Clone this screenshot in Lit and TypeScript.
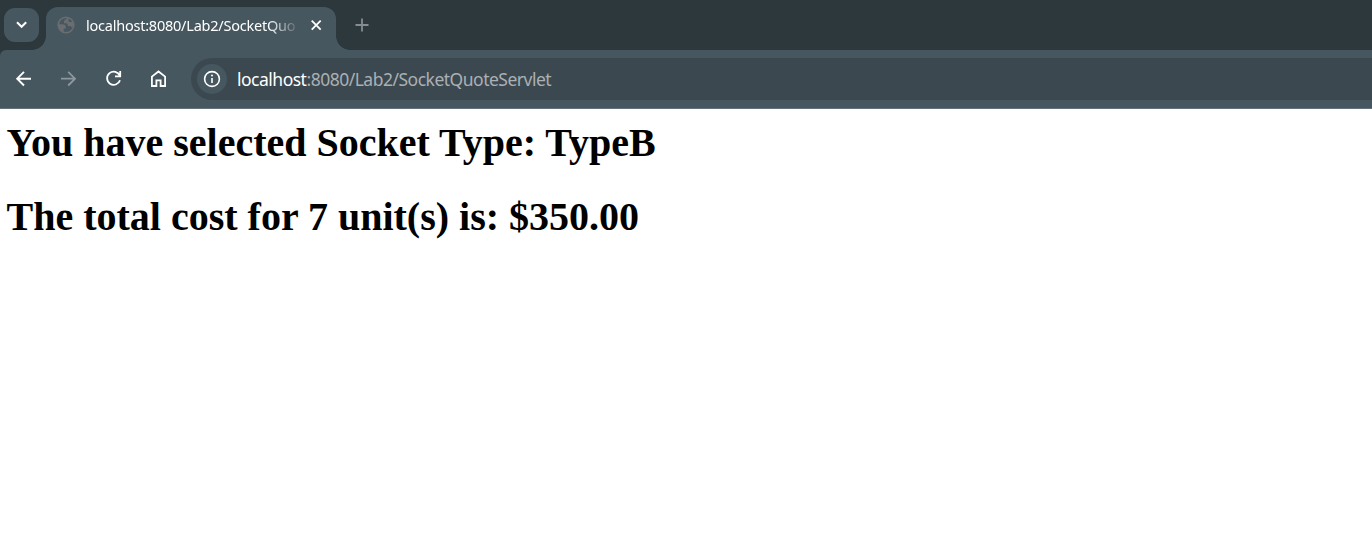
import { LitElement, html, css } from "lit";
import { customElement } from "lit/decorators.js";

@customElement("browser-tabs")
class BrowserTabs extends LitElement {
  static styles = css`
    :host { display: flex; height: 50px; background: #2d383d; box-sizing: border-box; padding: 7px 0 0 4px; align-items: flex-start; font-family: "Noto Sans", "Open Sans", sans-serif; }
    svg { display: block; flex: none; }
    .search { width: 35px; height: 34px; margin-top: 1px; border-radius: 11px; background: #465760; display: grid; place-items: center; }
    .tab { position: relative; width: 290px; height: 43px; margin-left: 7px; box-sizing: border-box; background: #465760; border-radius: 12px 12px 0 0; display: flex; padding: 0 0 7px 11px; align-items: center; }
    .tab::before, .tab::after { content: ""; position: absolute; bottom: 0; width: 14px; height: 14px; }
    .tab::before { left: -14px; background: radial-gradient(circle at 0 0, transparent 13.5px, #465760 14.2px); }
    .tab::after { right: -14px; background: radial-gradient(circle at 100% 0, transparent 13.5px, #465760 14.2px); }
    .title { width: 212px; margin: 0 0 0 11px; white-space: nowrap; color: #fff; font-size: 14.5px; line-height: 20px; letter-spacing: -0.23px; mask-image: linear-gradient(to right, #000 182px, transparent 214px); }
    .close { margin-left: 12px; }
    .add { margin: 11px 0 0 19px; }
  `;
  render() {
    return html`
      <div class="search"><svg width="12" height="8" viewBox="0 0 12 8" fill="none" stroke="#fff" stroke-width="2"><path d="M1 1.3 5.6 5.8 10.2 1.3" /></svg></div>
      <div class="tab">
        <svg width="18" height="18" viewBox="0 0 18 18"><circle cx="9" cy="9" r="7.8" fill="none" stroke="#6b6d70" stroke-width="1.6" /><path fill="#6b6d70" d="M9.5 1.2V3.3Q7 3.3 7 5.5V7.2H9.3Q10.8 7.2 10.8 9V10H13.2Q14.2 10 14.2 11.3L16.6 10.5 17 8.5 15.5 6H13Q11.5 6 11.5 4.5V1.8ZM1.2 8.2H5.5Q8.8 8.2 8.8 11.2V12.4H6.7V16.5L3.5 14.5 1.2 11Z" /></svg>
        <div class="title">localhost:8080/Lab2/SocketQuo</div>
        <svg class="close" width="12" height="12" viewBox="0 0 12 12" stroke="#fff" stroke-width="1.8"><path d="M1.7 1.7 10.7 10.7M10.7 1.7 1.7 10.7" /></svg>
      </div>
      <svg class="add" width="14" height="14" viewBox="0 0 14 14" stroke="#858d92" stroke-width="1.8"><path d="M0.5 7H13.5M7 .5V13.5" /></svg>
    `;
  }
}

@customElement("browser-toolbar")
class BrowserToolbar extends LitElement {
  static styles = css`
    :host { display: block; background: #2d383d; }
    .bar { display: flex; height: 59px; box-sizing: border-box; padding: 8px 0 8px 14px; background: #465760; border-bottom: 1px solid #64737b; border-top-left-radius: 6px; font-family: "Noto Sans", "Open Sans", sans-serif; }
    svg { display: block; flex: none; }
    .nav { display: flex; gap: 25px; width: 177px; align-items: center; }
    .address { flex: 1; display: flex; align-items: center; background: #3c484f; border-radius: 21px 0 0 21px; padding-left: 6px; }
    .info { width: 30px; height: 30px; border-radius: 50%; background: #465760; display: grid; place-items: center; }
    .url { margin: 0 0 0 10px; font-size: 17.5px; line-height: 24px; white-space: nowrap; color: #aab0b4; letter-spacing: -0.5px; }
    .host { color: #fff; }
  `;
  render() {
    return html`
      <div class="bar">
        <div class="nav">
          <svg width="20" height="20" viewBox="0 0 20 20" fill="none" stroke="#fff" stroke-width="1.9"><path d="M17 9.7H3.6M10 2.9 3.2 9.7 10 16.5" /></svg>
          <svg width="20" height="20" viewBox="0 0 20 20" fill="none" stroke="#8d989e" stroke-width="1.8"><path d="M2 9.7H15.6M9.2 2.9 16 9.7 9.2 16.5" /></svg>
          <svg width="20" height="20" viewBox="0 0 20 20" fill="none" stroke="#fff" stroke-width="1.8"><path d="M15.8 6.7A6.6 6.6 0 1 0 16 11.3M16.2 2V7.3H11" /></svg>
          <svg width="20" height="20" viewBox="0 0 20 20" fill="none" stroke="#fff" stroke-width="1.8"><path d="M2.9 17V7.6L9.5 2.5 16.1 7.6V17H11.6V11.4H7.4V17Z" /></svg>
        </div>
        <div class="address">
          <div class="info"><svg width="18" height="18" viewBox="0 0 18 18"><circle cx="9" cy="9" r="7.4" fill="none" stroke="#fff" stroke-width="1.6" /><path d="M9 8V13" stroke="#fff" stroke-width="1.6" /><circle cx="9" cy="5.6" r="1" fill="#fff" /></svg></div>
          <div class="url"><span class="host">localhost</span>:8080/Lab2/SocketQuoteServlet</div>
        </div>
      </div>
    `;
  }
}

@customElement("app-root")
class AppRoot extends LitElement {
  static styles = css`
    :host { display: block; height: 545px; background: #fff; overflow: hidden; }
    .page { padding: 11px 0 0 6.5px; font-family: "Liberation Serif", "Times New Roman", serif; color: #000; }
    .line { margin: 0 0 28px; font-size: 40px; font-weight: 700; line-height: 46px; white-space: nowrap; }
  `;
  render() {
    return html`
      <browser-tabs></browser-tabs>
      <browser-toolbar></browser-toolbar>
      <div class="page">
        <h1 class="line">You have selected Socket Type: TypeB</h1>
        <h1 class="line">The total cost for 7 unit(s) is: $350.00</h1>
      </div>
    `;
  }
}
